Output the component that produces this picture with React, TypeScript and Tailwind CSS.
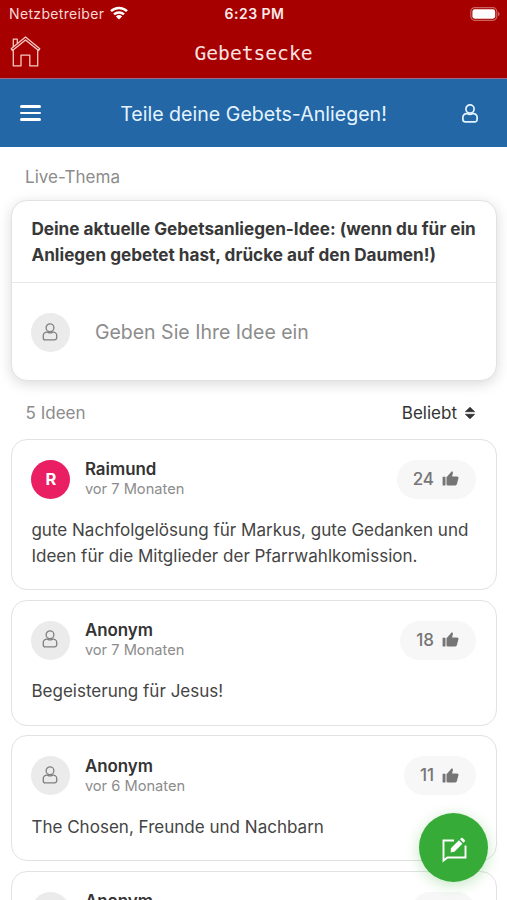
import React from "react";

function PersonIcon({ className, stroke = 1.5 }: { className: string; stroke?: number }) {
  return (
    <svg viewBox="0 0 16 19" fill="none" stroke="currentColor" strokeWidth={stroke} className={className}>
      <circle cx="8" cy="5" r="4.100" />
      <path d="M5.200 9.600H4.600A3.700 3.700 0 0 0 .9 13.300v2.300a2.300 2.300 0 0 0 2.300 2.300h9.600a2.300 2.300 0 0 0 2.300-2.300v-2.300a3.700 3.700 0 0 0-3.700-3.700h-.6c-1.600.9-4 .9-5.600 0Z" />
    </svg>
  );
}

function ThumbIcon() {
  return (
    <svg viewBox="0 0 17 15" fill="#757575" className="mt-[-1px] h-[15px] w-[17px]">
      <path d="M.6 5.700h2.900v8.700H.6zM4.500 6.200 9.800.3c.9.3 1.300.9 1.100 1.700l-.8 3.400h5c1 0 1.600.8 1.400 1.700l-1.600 5.900c-.2.8-.8 1.400-1.600 1.400H6c-.9 0-1.500-.6-1.500-1.500z" />
    </svg>
  );
}

function StatusBar() {
  return (
    <div className="grid h-7 grid-cols-3 items-center pl-[9px] pr-[7px] text-white">
      <div className="flex items-center gap-[6px]">
        <span className="whitespace-nowrap text-[14px] leading-none tracking-[0.34px] text-[#f8d9d6]">Netzbetreiber</span>
        <svg viewBox="0 0 18 14" fill="none" stroke="#fff" strokeWidth="2.500" className="mt-[-2px] h-[14px] w-[18px] shrink-0">
          <path d="M1 5.100a11.600 11.600 0 0 1 16 0M4 8.400a7.300 7.300 0 0 1 10 0" />
          <path d="M9 13.600 5.900 10.500a4.500 4.500 0 0 1 6.200 0Z" fill="#fff" stroke="none" />
        </svg>
      </div>
      <span className="whitespace-nowrap text-center text-[14px] font-semibold leading-none tracking-[0.460px] text-[#fdeae8]">6:23 PM</span>
      <svg viewBox="0 0 30 14" className="mt-[-1px] h-[14px] w-[30px] justify-self-end">
        <rect x=".8" y=".7" width="26" height="12.600" rx="4" fill="none" stroke="#cb6560" strokeWidth="1.200" />
        <rect x="2.400" y="2.300" width="22.800" height="9.400" rx="2.400" fill="#fff" />
        <path d="M28 5v4.200c1-.4 1.600-1.200 1.600-2.100S29 5.400 28 5Z" fill="#cb6560" />
      </svg>
    </div>
  );
}

function Header() {
  return (
    <header className="h-[79px] border-b border-[#9d6d85] bg-[#a60000]">
      <StatusBar />
      <div className="grid h-[50px] grid-cols-[1fr_auto_1fr] items-center px-[10px]">
        <svg viewBox="0 0 31 31" fill="none" stroke="#f6c9c4" strokeWidth="1.300" strokeLinejoin="round" className="mt-[-3px] h-[31px] w-[31px]">
          <path d="M1.200 12.700 15.500 1l14.300 11.700-1.300 1.800L15.500 3.900 2.500 14.500Z" />
          <path d="M3.300 10.700V3.200h4v4.200M3.300 14.200v15.700h7.700V19.200h8.800v10.700h7.900V14.200" />
        </svg>
        <h1 className="pt-px font-['DejaVu_Sans_Mono',monospace] text-[19.600px] leading-none text-[#fbe3e0]">Gebetsecke</h1>
      </div>
    </header>
  );
}

function NavBar() {
  return (
    <nav className="flex h-[68px] items-center justify-between bg-[#2367a7] pl-5 pr-[29px] text-[#e4f4ff]">
      <div className="flex w-[21px] flex-col gap-[4px]">
        <i className="h-[2.500px] rounded-full bg-white" />
        <i className="h-[2.500px] rounded-full bg-white" />
        <i className="h-[2.500px] rounded-full bg-white" />
      </div>
      <h2 className="whitespace-nowrap pl-1 pt-[3px] text-[19.600px] leading-none">Teile deine Gebets-Anliegen!</h2>
      <PersonIcon className="h-[19px] w-4" stroke={1.700} />
    </nav>
  );
}

function AnonymousAvatar() {
  return (
    <div className="flex size-[39px] shrink-0 items-center justify-center rounded-full bg-[#ebebeb] text-[#808080]">
      <PersonIcon className="mt-[-2px] mr-px h-[18px] w-4" stroke={1.400} />
    </div>
  );
}

type Idea = { name: string; time: string; votes: string; text: string; initial?: string; height: string };

const ideas: Idea[] = [
  {
    name: "Raimund",
    time: "vor 7 Monaten",
    votes: "24",
    text: "gute Nachfolgelösung für Markus, gute Gedanken und Ideen für die Mitglieder der Pfarrwahlkomission.",
    initial: "R",
    height: "h-[151.500px]",
  },
  { name: "Anonym", time: "vor 7 Monaten", votes: "18", text: "Begeisterung für Jesus!", height: "h-[126px]" },
  { name: "Anonym", time: "vor 6 Monaten", votes: "11", text: "The Chosen, Freunde und Nachbarn", height: "h-[126px]" },
  { name: "Anonym", time: "", votes: "", text: "", height: "h-[126px]" },
];

function IdeaCard({ idea }: { idea: Idea }) {
  return (
    <article className={`shrink-0 rounded-[16px] border border-[#e2e2e2] bg-white pl-[19.400px] pr-[20px] pt-[19.500px] ${idea.height}`}>
      <div className="flex items-center">
        {idea.initial ? (
          <div className="flex size-[39px] shrink-0 items-center justify-center rounded-full bg-[#e91e63] pt-px text-[16.500px] font-bold leading-none text-white">
            {idea.initial}
          </div>
        ) : (
          <AnonymousAvatar />
        )}
        <div className="ml-[14.500px] flex flex-1 flex-col">
          <span className="text-[16.900px] font-semibold leading-[21px] text-[#333]">{idea.name}</span>
          <span className="h-[19px] text-[14.650px] leading-[19px] text-[#8c8c8c]">{idea.time}</span>
        </div>
        <div className="flex h-[39px] min-w-[65px] items-center justify-end gap-[8px] rounded-full bg-[#f7f7f7] pl-[16px] pr-[17px]">
          <span className="text-[17px] font-medium leading-none text-[#757575]">{idea.votes}</span>
          <ThumbIcon />
        </div>
      </div>
      <p className="mt-[18px] text-[17.050px] leading-[25.700px] text-[#444]">{idea.text}</p>
    </article>
  );
}

export default function App() {
  return (
    <div className="relative h-[900px] w-[507px] overflow-hidden bg-white font-['Inter','Liberation_Sans',sans-serif]">
      <Header />
      <NavBar />
      <main className="flex flex-col pl-[11px] pr-[10px]">
        <div className="flex h-[53px] items-center pl-[14px] pt-[7px] text-[17.050px] text-[#8c8c8c]">Live-Thema</div>
        <section className="h-[181px] rounded-[16px] border border-[#e2e2e2] bg-white shadow-[0_3px_14px_rgba(0,0,0,0.15)]">
          <h3 className="h-[82px] whitespace-nowrap border-b border-[#e8e8e8] pl-[19.400px] pt-[15px] text-[17.150px] font-bold leading-[25.500px] text-[#383838]">
            Deine aktuelle Gebetsanliegen-Idee: (wenn du für ein
            <br />
            Anliegen gebetet hast, drücke auf den Daumen!)
          </h3>
          <div className="flex h-[98px] items-center gap-[24.500px] pl-[19.400px] pt-px">
            <AnonymousAvatar />
            <span className="pt-px text-[19.500px] text-[#8c8c8c]">Geben Sie Ihre Idee ein</span>
          </div>
        </section>
        <div className="flex h-[57.500px] items-center justify-between pl-[14.500px] pr-[21px] pt-[7px] text-[17.050px]">
          <span className="text-[#8c8c8c]">5 Ideen</span>
          <span className="flex items-center gap-[7px] text-[#333]">
            Beliebt
            <svg viewBox="0 0 12 14" fill="#333" className="h-[14px] w-3">
              <path d="M6 1.300 10.600 5.700H1.400ZM6 12.700 1.400 8.300h9.200Z" stroke="#333" strokeWidth=".8" strokeLinejoin="round" />
            </svg>
          </span>
        </div>
        <div className="flex flex-col gap-[9.500px]">
          {ideas.map((idea, i) => (
            <IdeaCard key={i} idea={idea} />
          ))}
        </div>
      </main>
      <button className="absolute left-[419px] top-[813px] flex size-[68.500px] items-center justify-center rounded-full bg-[#37ab38] shadow-[0_3px_14px_rgba(55,171,56,0.3)]">
        <svg viewBox="0 0 26 28" fill="none" className="mt-[5px] ml-[2px] h-[28px] w-[26px]">
          <path d="M13 4.500H2.500v20L6.500 21.500H24.500V9.500" stroke="#fff" strokeWidth="1.900" />
          <path d="m9.700 16.400.2-4.100 8-8 3.500 3.500-8 8ZM19 3.200l1.200-1.200c.4-.4 1-.4 1.400 0l2.100 2.100c.4.4.4 1 0 1.400l-1.200 1.200Z" fill="#fff" />
        </svg>
      </button>
    </div>
  );
}
